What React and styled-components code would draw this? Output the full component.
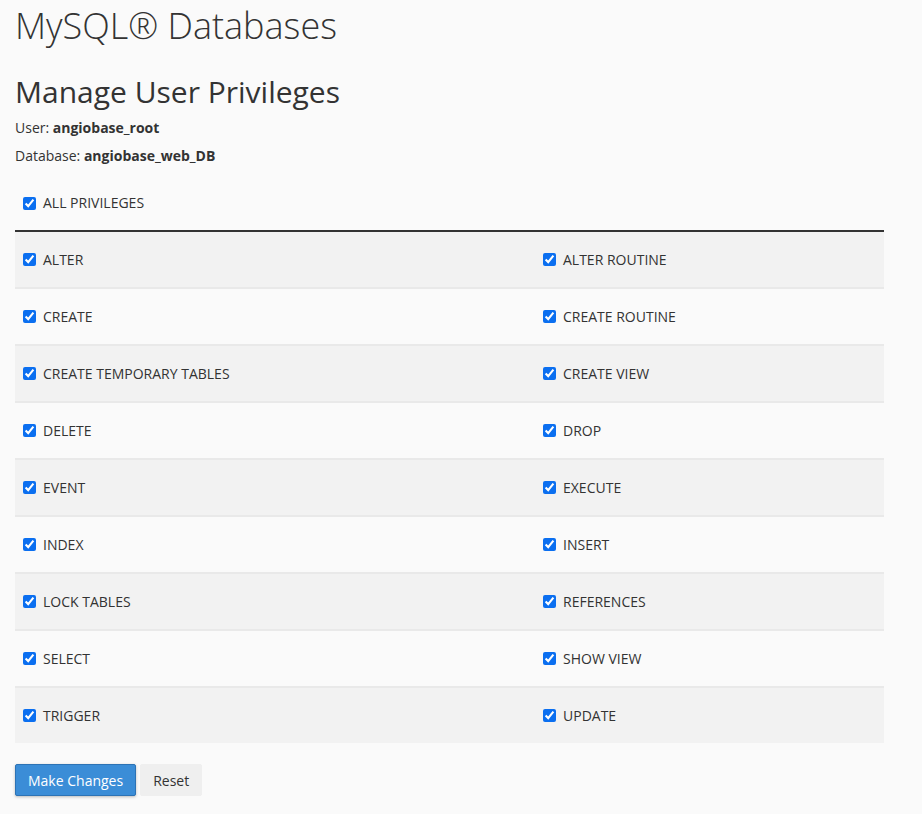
import React from 'react'
import styled, { createGlobalStyle } from 'styled-components'

const GlobalStyle = createGlobalStyle`
  body {
    margin: 0;
    background: #fafafa;
    font-family: 'Open Sans', 'Liberation Sans', sans-serif;
    color: #333333;
  }
`

const Page = styled.main`
  padding: 0 38px 17px 15px;
`

const Title = styled.h1`
  margin: 0;
  padding-top: 4px;
  font-size: 36px;
  font-weight: 300;
  line-height: 44px;
`

const Subtitle = styled.h2`
  margin: 24px 0 0;
  font-size: 30px;
  font-weight: 400;
  line-height: 40px;
`

const Info = styled.p`
  margin: ${props => (props.first ? '6px' : '8px')} 0 0;
  font-size: 14px;
  line-height: 20px;

  b {
    font-weight: 700;
  }
`

const Check = styled.label`
  display: flex;
  align-items: center;
  gap: 7px;
  font-size: 14px;
  line-height: 20px;
  text-transform: uppercase;

  input {
    margin: 0;
    width: 13px;
    height: 13px;
    accent-color: #0b6ff0;
  }
`

const AllRow = styled.div`
  padding: 27px 8px 17px;
`

const Table = styled.div`
  display: grid;
  grid-template-columns: 520px 1fr;
  border-top: 2px solid #333333;
`

const Row = styled.div`
  display: contents;

  & > div {
    display: flex;
    align-items: center;
    height: 55px;
    padding: 0 8px;
    background: ${props => (props.odd ? '#f2f2f2' : '#fafafa')};
    border-bottom: ${props => (props.last ? '0' : '2px solid #e9e9e9')};
  }
`

const Actions = styled.div`
  display: flex;
  gap: 4px;
  margin-top: 21px;
`

const Button = styled.button`
  height: 32px;
  padding: 0 12px;
  font-family: inherit;
  font-size: 14px;
  border-radius: 2px;
  cursor: pointer;
  color: ${props => (props.primary ? '#ffffff' : '#333333')};
  background: ${props => (props.primary ? '#3b8dd7' : '#efefef')};
  border: 1px solid ${props => (props.primary ? '#2d73b5' : '#efefef')};
  box-shadow: ${props => (props.primary ? '0 1px 3px rgba(0,0,0,0.25)' : 'none')};
`

const pairs = [
  ['Alter', 'Alter Routine'],
  ['Create', 'Create Routine'],
  ['Create Temporary Tables', 'Create View'],
  ['Delete', 'Drop'],
  ['Event', 'Execute'],
  ['Index', 'Insert'],
  ['Lock Tables', 'References'],
  ['Select', 'Show View'],
  ['Trigger', 'Update'],
]

const Priv = ({ name }) => (
  <div>
    <Check>
      <input type="checkbox" defaultChecked />
      {name}
    </Check>
  </div>
)

const App = () => (
  <Page>
    <GlobalStyle />
    <Title>MySQL® Databases</Title>
    <Subtitle>Manage User Privileges</Subtitle>
    <Info first>
      User: <b>angiobase_root</b>
    </Info>
    <Info>
      Database: <b>angiobase_web_DB</b>
    </Info>
    <AllRow>
      <Check>
        <input type="checkbox" defaultChecked />
        All Privileges
      </Check>
    </AllRow>
    <Table>
      {pairs.map(([a, b], i) => (
        <Row key={a} odd={i % 2 === 0} last={i === pairs.length - 1}>
          <Priv name={a} />
          <Priv name={b} />
        </Row>
      ))}
    </Table>
    <Actions>
      <Button primary>Make Changes</Button>
      <Button>Reset</Button>
    </Actions>
  </Page>
)

export default App
